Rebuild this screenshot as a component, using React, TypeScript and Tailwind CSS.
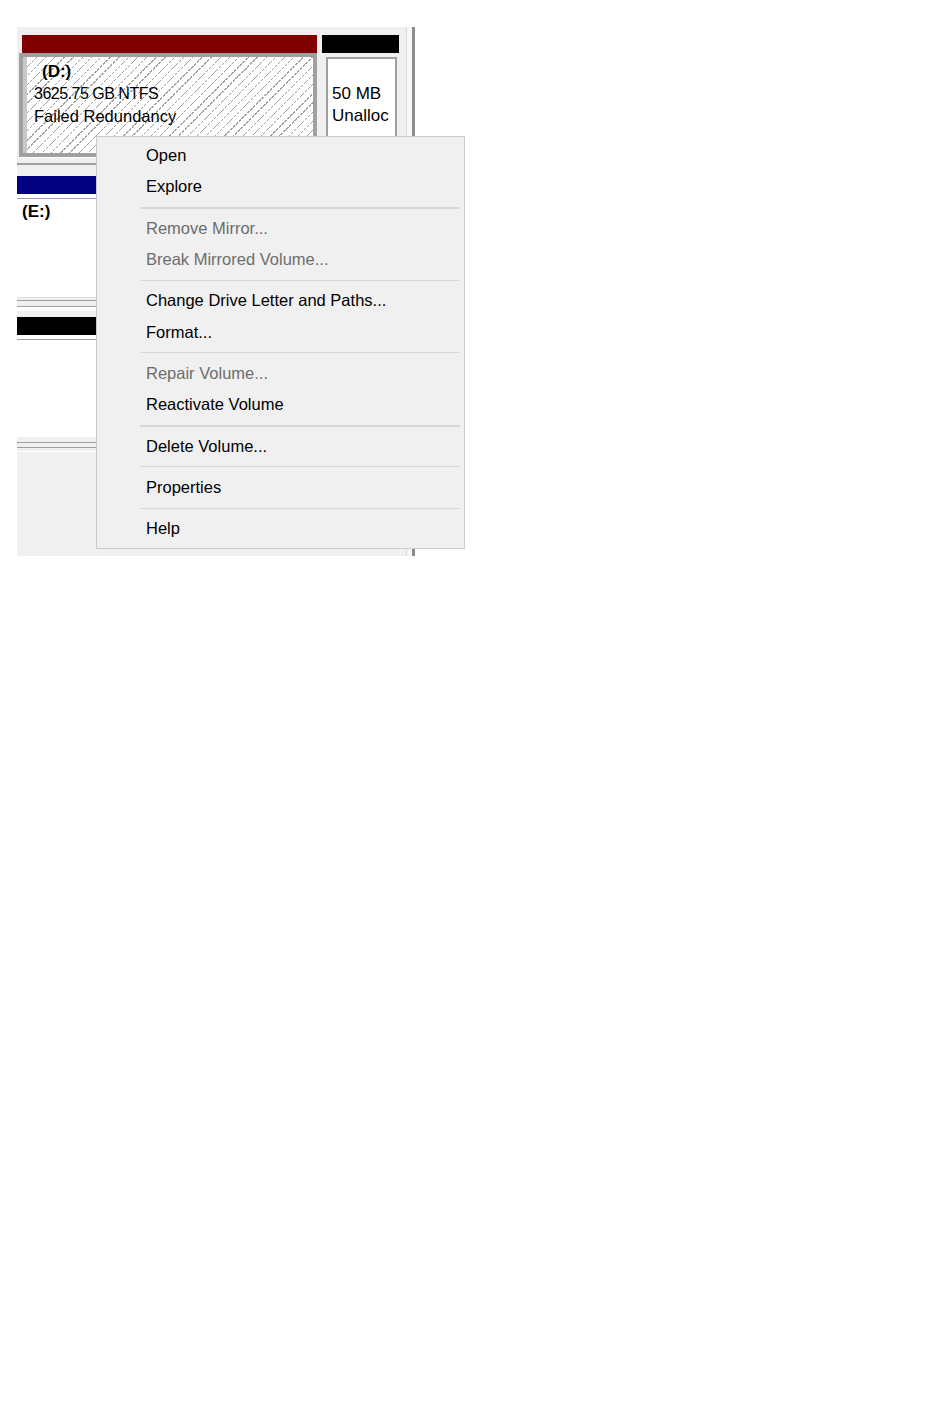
import React from 'react';

type MenuEntry = { label: string; disabled?: boolean } | { sep: 'thin' | 'thick' };

const entries: MenuEntry[] = [
    { label: 'Open' },
    { label: 'Explore' },
    { sep: 'thick' },
    { label: 'Remove Mirror...', disabled: true },
    { label: 'Break Mirrored Volume...', disabled: true },
    { sep: 'thin' },
    { label: 'Change Drive Letter and Paths...' },
    { label: 'Format...' },
    { sep: 'thin' },
    { label: 'Repair Volume...', disabled: true },
    { label: 'Reactivate Volume' },
    { sep: 'thick' },
    { label: 'Delete Volume...' },
    { sep: 'thin' },
    { label: 'Properties' },
    { sep: 'thin' },
    { label: 'Help' },
];

function ContextMenu() {
    return (
        <div className="absolute left-[96px] top-[136px] w-[369px] border border-[#cccccc] bg-[#f0f0f0] py-[3px] text-[16.5px]">
            {entries.map((e, i) =>
                'sep' in e ? (
                    <div key={i} className="flex h-[10px] items-center pl-[43px] pr-[4px]">
                        <div className={e.sep === 'thick' ? 'h-[2px] w-full bg-[#d7d7d7]' : 'h-px w-full bg-[#d7d7d7]'} />
                    </div>
                ) : (
                    <div
                        key={i}
                        className={
                            'h-[31.33px] whitespace-nowrap pl-[49px] leading-[31.33px] ' +
                            (e.disabled ? 'text-[#6d6d6d]' : 'text-black')
                        }
                    >
                        {e.label}
                    </div>
                )
            )}
        </div>
    );
}

function DiskRowD() {
    return (
        <div className="flex h-[122px]">
            {/* (D:) failed mirror volume, selected */}
            <div className="ml-[2px] flex w-[298px] flex-col">
                <div className="ml-[3px] h-[18px] bg-[#800000]" />
                <div className="flex h-[104px] border-[4px] border-[#a0a0a0]">
                    <div className="flex-1 border-l-[4px] border-[#c8c8c8] bg-white bg-[image:repeating-linear-gradient(45deg,transparent_0px,transparent_3px,#ffffff_3px,#ffffff_4px),repeating-linear-gradient(135deg,#a0a0a0_0px,#a0a0a0_1px,transparent_1px,transparent_6.5px)] pl-[7px] pt-[4px] text-[16.5px] leading-[22px] text-black">
                        <div className="pl-[8px] text-[17px] font-bold">(D:)</div>
                        <div className="text-[16px] tracking-[-0.5px]">3625.75 GB NTFS</div>
                        <div>Failed Redundancy</div>
                    </div>
                </div>
            </div>

            {/* unallocated space */}
            <div className="ml-[5px] flex w-[79px] flex-col">
                <div className="h-[18px] w-[77px] bg-black" />
                <div className="flex h-[104px] px-[4px] pt-[4px]">
                    <div className="flex-1 border-x-2 border-t-2 border-[#a0a0a0] bg-white pl-[4px] pt-[2px] text-[17px] leading-[22px] text-black">
                        <div>&nbsp;</div>
                        <div>50 MB</div>
                        <div>Unalloc</div>
                    </div>
                </div>
            </div>
        </div>
    );
}

export default function App() {
    return (
        <div className="relative h-[1419px] w-[950px] bg-white font-['Liberation_Sans',Arial,sans-serif]">
            <div className="pl-[17px] pt-[27px]">
                <div className="flex h-[529px] w-[398px]">
                    <div className="flex w-[389px] flex-col bg-[#f0f0f0]">
                        <div className="h-[8px]" />
                        <DiskRowD />
                        <div className="h-[6px] border-t border-white" />
                        <div className="h-[2px] bg-[#a0a0a0]" />
                        <div className="h-[11px]" />

                        {/* disk with (E:) */}
                        <div className="h-[18px] w-[382px] bg-[#000080]" />
                        <div className="h-[4px] bg-white" />
                        <div className="h-px bg-[#a0a0a0]" />
                        <div className="h-[98px] bg-white pl-[5px] pt-[2px] text-[17px] font-bold leading-[22px] text-black">(E:)</div>
                        <div className="h-[3px] border-t border-[#e0e0e0]" />
                        <div className="h-px bg-[#a0a0a0]" />
                        <div className="h-[5px]" />
                        <div className="h-px bg-[#a0a0a0]" />
                        <div className="h-[4px] bg-white" />
                        <div className="h-[6px]" />

                        {/* next disk */}
                        <div className="h-[18px] w-[382px] bg-black" />
                        <div className="h-[4px] bg-white" />
                        <div className="h-px bg-[#a0a0a0]" />
                        <div className="h-[97px] bg-white" />
                        <div className="h-[5px]" />
                        <div className="h-px bg-[#a0a0a0]" />
                        <div className="h-[4px]" />
                        <div className="h-px bg-[#a0a0a0]" />
                        <div className="h-[3px]" />
                        <div className="h-px bg-white" />
                        <div className="flex-1" />
                    </div>
                    <div className="w-px bg-[#dadada]" />
                    <div className="w-[5px] bg-[#f7f7f7]" />
                    <div className="w-[3px] bg-[#8c8c8c]" />
                </div>
            </div>
            <ContextMenu />
        </div>
    );
}
